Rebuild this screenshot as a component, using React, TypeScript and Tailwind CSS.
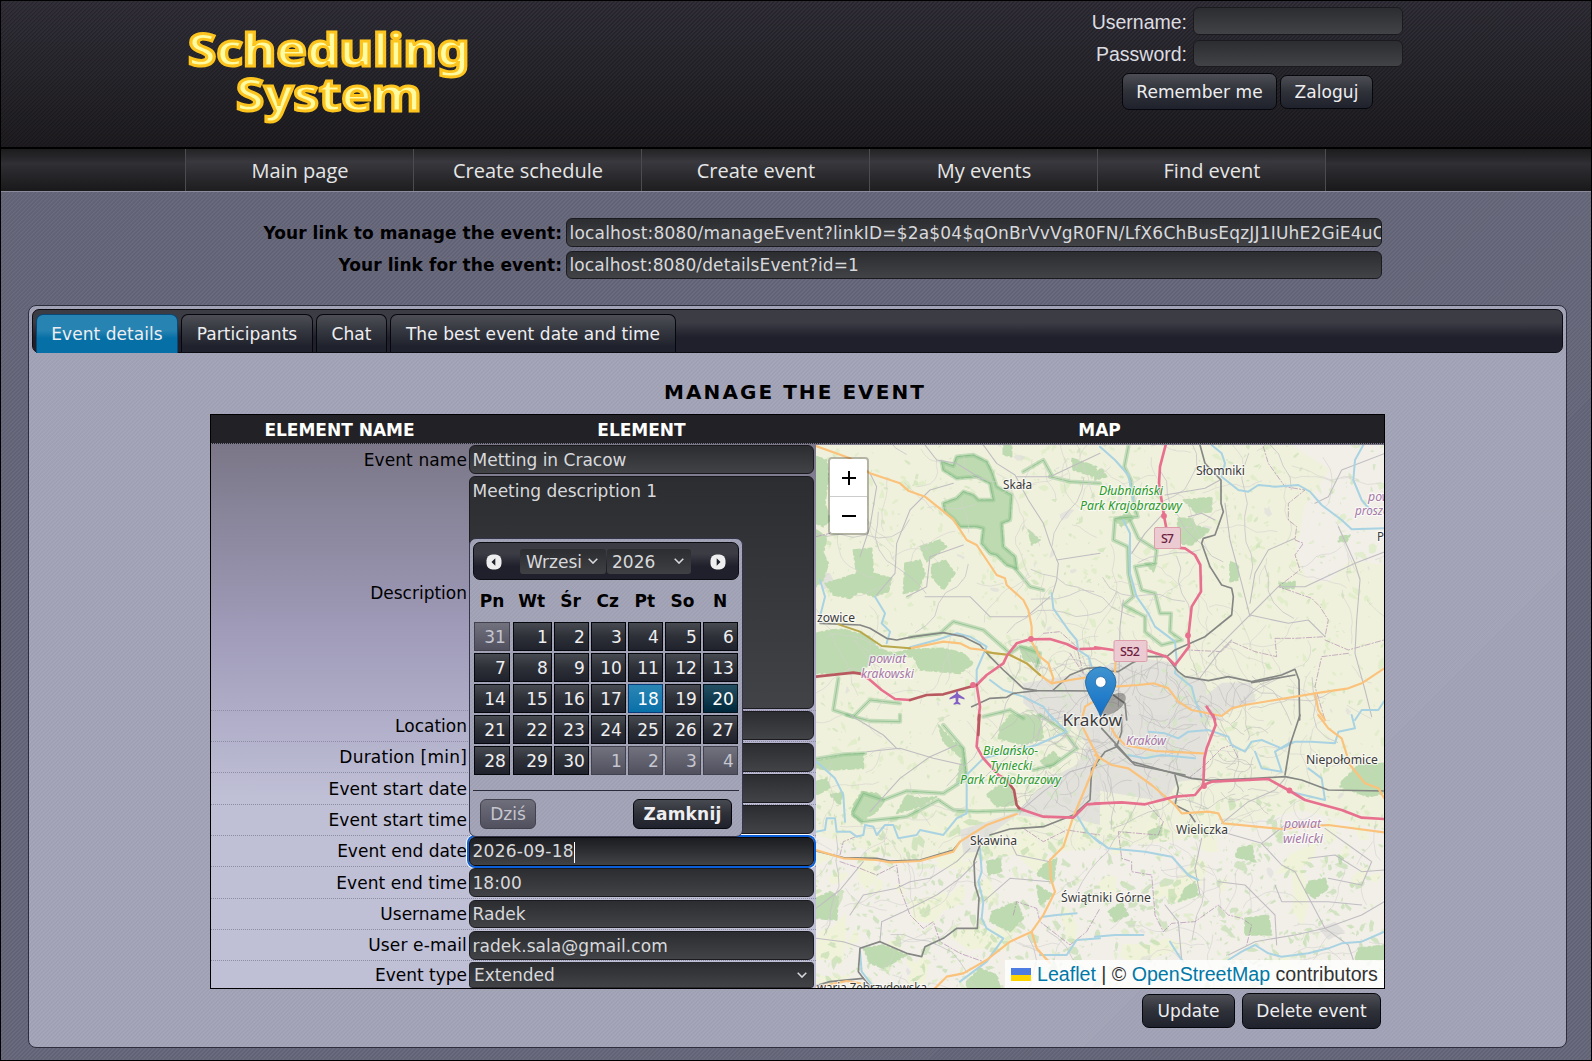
import type { ReactNode } from 'react';

const font = "font-['DejaVu_Sans',sans-serif]";
const field =
  'block rounded-[6px] border border-[#1b1b1f] bg-linear-to-b from-[#2c2d30] to-[#424347] pl-[2.500px] text-[17px] text-[#d8d9dc] outline-none';
const button =
  'flex items-center justify-center rounded-[7px] border border-[#06070c] bg-linear-to-b from-[#4d4e55] via-[#2f3139] to-[#1f222c] pt-[2px] text-[17px] tracking-[0.05px] text-[#eeeef0]';
const rowLabel = 'w-[256px] self-center pt-[2px] text-right text-[17px]';
const stripes =
  'bg-[repeating-linear-gradient(135deg,rgba(255,255,255,0.06)_0px,rgba(255,255,255,0.06)_1.2px,transparent_1.6px,transparent_2.83px)]';

function mulberry(seed: number) {
  let a = seed;
  return () => {
    a = (a + 0x6d2b79f5) | 0;
    let t = Math.imul(a ^ (a >>> 15), 1 | a);
    t = (t + Math.imul(t ^ (t >>> 7), 61 | t)) ^ t;
    return ((t ^ (t >>> 14)) >>> 0) / 4294967296;
  };
}

function scatter(seed: number, count: number, size: number, y0 = 445, y1 = 988, x0 = 816, x1 = 1384) {
  const r = mulberry(seed);
  let d = '';
  for (let i = 0; i < count; i++) {
    const x = x0 + r() * (x1 - x0);
    const y = y0 + r() * (y1 - y0);
    const n = 5 + Math.floor(r() * 4);
    const s = size * (0.35 + r() * r() * 1.6);
    const tilt = r() * 3;
    for (let k = 0; k < n; k++) {
      const ang = (k / n) * 6.283;
      const rad = s * (0.4 + r() * 0.9);
      const px = Math.cos(ang) * rad * 1.4;
      const py = Math.sin(ang) * rad * 0.7;
      const qx = x + px * Math.cos(tilt) - py * Math.sin(tilt);
      const qy = y + px * Math.sin(tilt) + py * Math.cos(tilt);
      d += (k ? 'L' : 'M') + qx.toFixed(1) + ' ' + qy.toFixed(1);
    }
    d += 'Z';
  }
  return d;
}

function lanes(seed: number, count: number, step: number, x0 = 816, x1 = 1384, y0 = 445, y1 = 988) {
  const r = mulberry(seed);
  let d = '';
  for (let i = 0; i < count; i++) {
    let x = x0 + r() * (x1 - x0);
    let y = y0 + r() * (y1 - y0);
    let a = r() * 6.28;
    d += `M${x.toFixed(1)} ${y.toFixed(1)}`;
    const n = 4 + Math.floor(r() * 7);
    for (let k = 0; k < n; k++) {
      a += (r() - 0.5) * 1.1;
      x += Math.cos(a) * step;
      y += Math.sin(a) * step;
      d += `L${x.toFixed(1)} ${y.toFixed(1)}`;
    }
  }
  return d;
}

const patchesLight = scatter(3, 1000, 3.2);
const patchesMid = scatter(11, 800, 2.1);
const patchesSouth = scatter(27, 560, 3.6, 800, 988);
const farmland = scatter(41, 46, 17, 800, 988);
const roadsMinor = lanes(5, 230, 7);
const roadsMajor = lanes(17, 34, 13);
const streets = lanes(23, 150, 4.5, 1030, 1250, 662, 800);
const cityGreen = scatter(61, 130, 3, 665, 800, 1010, 1220);

const quadrants = [
  {
    at: 'translate(810 440) scale(.33333)',
    urban: ['640,730 730,715 870,690 870,840 700,840 640,790', '30,400 60,400 75,430 40,450'],
    wood: [
      '395,65 430,78 440,50 490,45 530,65 545,95 560,140 605,165 600,240 575,250 580,320 615,350 620,385 590,375 560,345 540,340 515,310 520,265 500,260 450,260 430,235 405,215 400,190 440,175 460,155 490,165 505,180 550,180 540,130 500,110 440,115 400,90',
      '18,50 50,60 55,110 45,190 60,240 40,260 18,250',
      '18,270 50,290 40,340 55,370 40,420 18,440',
      '130,330 185,325 190,400 245,415 235,455 190,470 150,455 120,475 70,465 45,430 80,420 140,400',
      '285,370 330,360 345,400 325,450 280,460',
      '330,320 390,300 410,320 350,365',
      '365,375 405,360 435,400 400,450 365,410',
      '18,580 60,570 100,568 180,590 205,625 250,640 300,628 400,625 460,640 490,670 450,700 330,690 310,650 200,650 150,700 18,700',
      '655,270 690,300 665,315',
      '785,55 860,80 855,110 790,90',
      '580,15 605,15 605,50 580,45',
      '630,620 680,620 690,670 640,660',
    ],
    parks: [
      '300,592 390,580 430,545 520,570 600,640 630,620 690,640 680,680',
      '85,715 70,810 130,830 180,780 270,790',
      '520,830 600,810 640,835',
      '720,110 780,125 870,130',
      '640,95 700,60 725,105',
      '615,385 660,440 700,450',
      '395,65 430,78 440,50 490,45 530,65 545,95 560,140 605,165 600,240 575,250 580,320 615,350 620,385 590,375 560,345 540,340 515,310 520,265 500,260 450,260 430,235 405,215 400,190 440,175 460,155 490,165 505,180 550,180 540,130 500,110 440,115 400,90 395,65',
    ],
    water: [
      '30,420 45,470 30,530',
      '195,470 225,520 215,550 240,575 230,610',
      '725,460 730,505 775,570 800,600 805,630 835,650 845,680',
      '300,622 380,600 440,580 480,590 530,620 500,690 500,730',
      '540,720 580,750 640,770 700,800 730,840',
    ],
    rail: [
      '30,550 150,555 180,565 230,595 260,600 310,590 400,578 460,590 510,615 540,650 580,690 640,745 680,752 870,753',
      '730,750 780,705 830,685 870,682',
      '485,800 540,775 590,772 610,760 680,752',
    ],
    minor: [
      '520,15 560,70 615,105 655,180 700,250 720,310 745,370 740,420 725,470',
      '345,15 380,60 440,70 520,120',
      '180,100 200,140 180,260 150,350',
      '430,130 360,150 300,210 260,310 255,400 200,465',
      '620,110 720,110 870,40',
      '740,360 870,340',
      '345,470 400,470 480,470 540,530 650,530 720,470',
      '460,315 360,350 350,440 290,470',
    ],
    orange: [
      '18,18 120,55 180,100 270,130 295,152 345,170 430,238 470,300 500,315 560,405 585,415 590,435 640,480 655,510 665,560 665,600',
      '300,625 400,605 450,610 480,625 520,630 550,640 600,645 650,670 690,705 725,730 780,720 830,712',
      '662,600 690,650 715,670 730,715 725,730',
      '850,785 825,800 815,840',
    ],
    olive: ['85,553 150,575 215,618 300,625', '530,637 600,645 650,670 690,705'],
    pink: [
      '150,701 180,720 215,750 255,777 300,780',
      '500,735 530,705 580,670 592,645 620,610 660,598 720,597 770,612 800,627',
      '812,627 870,625',
      '500,735 510,800 505,840',
    ],
    crimson: ['18,710 130,698 150,701', '300,780 350,765 400,763 500,735'],
    border: ['700,580 750,575 800,620 820,700 780,640', '18,290 60,280 100,240'],
  },
  {
    at: 'translate(1095 440) scale(.33333)',
    urban: [
      '0,690 100,650 220,665 260,710 330,720 335,765 345,812 390,840 0,840',
      '335,765 380,728 470,728 482,785 430,800 380,828 345,812',
    ],
    wood: [
      '250,235 290,235 300,255 345,270 290,315 240,310',
      '265,180 350,172 350,215 305,220',
      '405,365 430,375 430,420 405,425',
      '735,290 765,285 755,305 730,305',
      '550,430 600,425 600,445 560,445',
      '0,100 20,85 35,110 0,120',
      '60,240 100,215 115,235 80,260',
      '150,370 185,370 175,395',
    ],
    parks: [
      '100,20 88,80 108,120 118,200 128,230 60,235 55,300 98,320 100,400 115,470 85,495 150,530 150,575 200,615 260,600 225,575 228,520 195,520 180,460 140,450 120,380 180,370 185,330 130,295 105,240',
    ],
    water: [
      '15,20 60,60 100,105 115,180',
      '85,240 105,280 105,400 125,470 160,520 180,560 240,605 245,660 240,700 290,740 300,780 320,830',
      '350,15 380,40 390,70 380,110 430,150 460,155 490,135 540,140 610,135 645,155 680,195 740,240 770,268 870,265',
      '805,15 780,60 775,120 800,180 830,215',
      '780,840 800,810 850,810 870,780',
    ],
    rail: [
      '315,15 330,70 378,120 378,190 385,215 360,285 325,295 320,310 345,380 380,435 410,445 415,470 410,525 330,590 240,630 215,650 150,650 110,670 70,695 0,690',
      '215,650 250,695 270,710 340,722 400,710 470,725 560,705 600,688 612,720 614,840',
      '470,728 600,705',
      '55,765 90,790 95,840',
    ],
    minor: [
      '210,165 330,145 375,120',
      '110,340 150,280 210,215',
      '340,650 400,590 480,510 550,440 630,440 780,370 870,335',
      '390,190 405,300 440,430 465,530',
      '465,525 580,550 640,540 690,590',
      '660,190 700,170 740,90 870,40',
      '730,260 780,370 795,420 785,540 780,640 810,750 830,830',
      '70,800 75,560 85,480',
      '310,720 370,640 410,600',
      '465,490 480,400 520,330 600,295',
      '280,230 320,220 360,240',
    ],
    orange: [
      '60,740 130,735 175,730 220,745 250,785 290,810 380,828 410,805 450,795 660,760 760,745 800,730 868,685',
      '660,760 670,810 690,840',
      '60,695 62,665',
    ],
    olive: [],
    pink: [
      '212,15 195,80 192,130 207,228 215,270',
      '215,320 270,325 300,345 316,375 318,455 290,500 280,590 282,620 240,675',
      '0,622 55,630 160,632 215,650 240,675',
      '335,800 355,830 360,840',
    ],
    crimson: [],
    border: [
      '505,20 520,70 545,105 570,140 630,150 580,190 580,240 605,260 600,300 625,310 600,345 615,390 550,440 650,475 675,500 700,540 690,590 600,595 540,595 545,650 480,635 410,605 380,635 280,630',
      '690,600 760,630 867,600',
      '760,640 680,650 660,740 690,840',
    ],
  },
  {
    at: 'translate(810 715) scale(.33333)',
    urban: [
      '450,345 530,320 620,290 670,240 720,190 800,150 830,90 790,20 870,-30 870,330 790,310 700,310 620,300 540,360 500,410 460,415',
    ],
    wood: [
      '130,270 155,230 200,235 225,255 200,290 150,320 125,300',
      '18,140 100,120 160,115 160,160 60,165 18,160',
      '570,40 600,0 690,0 700,70 640,90 565,70',
      '385,30 430,80 460,100 470,190 440,200 455,130 400,80',
      '530,240 560,215 600,205 620,270 560,275',
      '18,550 60,530 85,545 80,615 18,610',
      '545,590 620,560 640,610 600,650 540,620',
      '160,700 220,690 290,720 220,760 180,745',
      '470,800 510,760 560,780 570,820 470,820',
      '530,440 570,430 575,470 535,480',
      '700,450 740,430 730,500 680,480',
      '690,140 730,110 750,130 720,160',
      '18,200 50,190 60,220 18,240',
      '60,240 100,230 90,270',
      '680,510 730,540 690,570',
      '290,240 330,250 380,245 330,275 260,295',
    ],
    parks: [
      '110,0 180,18 270,20 270,0',
      '18,132 100,118 165,115',
      '130,290 160,235 220,255 290,228 400,235 470,190 460,100 400,30',
      '130,300 155,320 290,305 385,255 430,285 500,290 640,285',
      '690,0 760,45 800,100 730,150 670,165',
    ],
    water: [
      '18,350 45,345 50,310 75,310 80,350 120,350 140,365 160,360 165,330 190,335 200,360 225,330 250,330 265,370 320,360 330,345 400,360 440,310 470,295 470,180 520,130 600,110 680,90 770,50 720,0',
      '510,400 515,470 505,500 520,560 515,610 530,640 580,670 530,740 450,800',
      '20,140 75,190 100,240 105,320',
      '700,605 740,600 800,595',
      '690,720 770,720 800,675 870,670',
      '150,710 155,770 190,815',
      '800,300 830,350 870,385',
    ],
    rail: [
      '18,408 100,428 200,430 240,438 330,435 430,405 450,380',
      '540,360 600,342 700,335 790,300 840,255 845,160 860,150',
      '510,390 492,440 495,510 507,550 502,640 440,640 400,670 345,695 335,725 290,715 210,680 150,700 145,770 160,790',
      '160,790 60,800 18,812',
      '160,790 185,820',
    ],
    minor: [
      '170,110 270,100 370,130 460,150',
      '120,0 220,60 260,100',
      '180,290 270,190 360,125 440,90',
      '120,600 160,540 260,520 300,500 360,490 440,440 480,400',
      '210,680 215,620 280,590 380,540 450,490 500,440',
      '18,580 90,525 160,440',
      '520,560 600,490 720,500',
      '590,360 620,420 720,440',
      '18,670 100,680 160,700',
      '850,150 780,170 700,230 640,280',
    ],
    orange: [
      '18,405 100,430 200,435 240,442 330,438 430,410 450,380 530,330 620,297',
      '820,40 850,100 865,125 830,210 790,305 760,395 720,435 722,490 735,530 700,600 665,650 600,680 530,735 460,775 410,785 375,820',
      '665,650 680,700 720,745',
      '30,815 110,798 150,805',
    ],
    olive: [],
    pink: [
      '508,0 500,95 520,130 565,180 590,195',
      '625,278 640,285 700,305 790,308 830,268 870,265',
    ],
    crimson: ['508,0 505,60', '590,195 612,225 620,270 628,280'],
    border: [
      '90,440 150,460 200,480 260,450 270,520 300,600 340,640 370,620 390,680 450,715 520,740',
      '640,340 700,380 770,345 870,360',
      '610,600 620,560 680,580 690,620 780,690 830,650 870,580',
      '90,420 100,380 150,360',
    ],
  },
  {
    at: 'translate(1095 715) scale(.33333)',
    urban: ['0,0 340,0 330,190 250,200 210,260 0,225', '670,640 720,620 750,650 700,675'],
    wood: [
      '740,200 790,150 868,145 868,235 820,245 735,215',
      '640,500 690,490 700,520 660,550 630,530',
      '430,400 470,390 480,440 420,425',
      '270,520 300,500 310,540 250,560',
      '450,610 520,600 530,660 450,660',
      '790,700 868,690 868,735 780,735',
      '160,350 200,330 200,360 165,375',
      '730,420 745,430 735,450',
      '40,590 80,560 100,600 60,620',
    ],
    parks: [],
    water: [
      '160,50 210,55 250,70 280,50 340,45 400,65 410,90 450,110 470,80 500,75 560,100 600,80 650,80 720,85 730,50 780,40 770,0',
      '0,370 40,400 150,410 230,425 280,480 310,495',
      '400,735 440,710 480,690 520,715 560,725 640,715 700,700 740,685 800,680 868,650',
      '0,665 60,660 145,660',
      '225,680 250,720 265,740',
      '480,110 500,160 560,170 540,110 590,80',
      '100,120 150,130 200,120 300,130',
      '585,230 690,255 680,190 640,160',
    ],
    rail: [
      '20,40 70,95 110,140 200,165 290,190 340,196 480,190 570,185 620,195 700,225 868,228',
      '60,90 120,150 270,180',
      '615,0 585,90 570,180',
      '0,150 30,110 65,95 80,50 80,0',
      '240,180 250,220 240,270 280,290 300,320',
    ],
    minor: [
      '380,325 460,260 540,225 570,190',
      '380,350 500,385 560,450 600,470 690,640',
      '500,385 570,330 700,330',
      '320,370 300,460 315,540',
      '640,430 720,420 800,470 868,465',
      '690,340 760,390 830,440 800,510 700,490',
      '690,640 800,600 868,560',
      '400,720 480,680 600,660 690,640 760,690 775,735',
      '540,510 560,560 700,560 800,570',
      '210,570 250,620 260,735',
      '370,500 450,510 540,600 545,690',
    ],
    orange: [
      '0,120 50,150 100,160 170,210 240,270 260,295 340,290 370,295 385,325 560,342 700,330 868,352',
      '50,40 60,60 90,90 180,108 325,115',
      '670,0 700,40 740,70 765,150 810,205 850,220 868,250',
    ],
    olive: [],
    pink: [
      '355,0 362,30 335,100 328,130 325,210 300,240 240,245 150,268 80,262 0,266',
      '325,210 350,200 520,192 585,228 630,255 740,285 800,308 868,312',
    ],
    crimson: [],
    border: [
      '160,270 205,320 190,360 70,350 80,430 110,440 110,470 170,480 180,600 205,650 230,625 300,620 370,570 400,600 440,610 470,630 455,690',
      '280,190 330,150 380,100 410,90 430,130',
    ],
  },
];

type Label = { x: number; y: number; w?: number; t: string; c?: string; i?: boolean; s?: number };
const labels: Label[] = [
  { x: 1003, y: 489, w: 29, t: 'Skała' },
  { x: 1196, y: 475, w: 49, t: 'Słomniki' },
  { x: 1099, y: 495, w: 64, t: 'Dłubniański', c: '#2b992b', i: true },
  { x: 1080, y: 510, w: 102, t: 'Park Krajobrazowy', c: '#2b992b', i: true },
  { x: 817, y: 621.5, w: 38, t: 'zowice' },
  { x: 869, y: 663, w: 37, t: 'powiat', c: '#a678a6', i: true },
  { x: 861, y: 677.5, w: 53, t: 'krakowski', c: '#a678a6', i: true },
  { x: 1368, y: 500.5, w: 37, t: 'powiat', c: '#a678a6', i: true },
  { x: 1355, y: 515, w: 60, t: 'proszowicki', c: '#a678a6', i: true },
  { x: 1377, y: 541, w: 60, t: 'Proszowice' },
  { x: 1062.5, y: 725.5, w: 59.5, t: 'Kraków', s: 17 },
  { x: 1126, y: 744.5, w: 40, t: 'Kraków', c: '#a678a6', i: true },
  { x: 983, y: 755, w: 55, t: 'Bielańsko-', c: '#2b992b', i: true },
  { x: 990, y: 770, w: 42, t: 'Tyniecki', c: '#2b992b', i: true },
  { x: 960, y: 784, w: 101, t: 'Park Krajobrazowy', c: '#2b992b', i: true },
  { x: 970, y: 844.5, w: 47, t: 'Skawina' },
  { x: 1061, y: 901.5, w: 90, t: 'Świątniki Górne' },
  { x: 1306, y: 764, w: 72, t: 'Niepołomice' },
  { x: 1176, y: 834, w: 52, t: 'Wieliczka' },
  { x: 1284, y: 828, w: 37, t: 'powiat', c: '#a678a6', i: true },
  { x: 1283, y: 842.5, w: 40, t: 'wielicki', c: '#a678a6', i: true },
  { x: 817, y: 992, w: 110, t: 'waria Zebrzydowska' },
];

function Lines({ list, color, width, dash, opacity }: { list: string[]; color: string; width: number; dash?: string; opacity?: number }) {
  return (
    <>
      {list.map((p, i) => (
        <polyline key={i} points={p} fill="none" stroke={color} strokeWidth={width} strokeDasharray={dash} opacity={opacity} strokeLinejoin="round" strokeLinecap="round" />
      ))}
    </>
  );
}

function Layer({ render }: { render: (q: (typeof quadrants)[number]) => ReactNode }) {
  return (
    <>
      {quadrants.map((q) => (
        <g key={q.at} transform={q.at}>
          {render(q)}
        </g>
      ))}
    </>
  );
}

function MapDrawing() {
  return (
    <svg viewBox="816 445 568 543" className="block h-full w-full">
      <rect x="816" y="445" width="568" height="543" fill="#f0f1dc" />
      <polygon points="1292,445 1384,445 1384,565 1350,560 1328,582 1308,580 1296,553 1305,505 1330,470" fill="#f2efe9" />
      <polygon points="816,835 900,860 980,858 1080,850 1180,840 1300,810 1384,830 1384,988 816,988" fill="#f2efe9" />
      <path d={farmland} fill="#f0f2da" />
      <path d={patchesLight} fill="#dcebc6" opacity="0.75" />
      <path d={patchesMid} fill="#c6dfb3" opacity="0.6" />
      <path d={patchesSouth} fill="#c4deb2" opacity="0.7" />
      <Layer render={(q) => q.urban.map((p) => <polygon key={p} points={p} fill="#dfdedb" opacity="0.85" />)} />
      <path d={cityGreen} fill="#d3e6c4" opacity="0.8" />
      <path d={scatter(77, 60, 3.4, 445, 988)} fill="#dddcdc" opacity="0.6" />
      <Layer render={(q) => q.wood.map((p) => <polygon key={p} points={p} fill="#bedab0" stroke="#bedab0" strokeWidth="5" strokeDasharray="22 7 9 5" strokeLinejoin="round" />)} />
      <Layer render={(q) => <Lines list={q.parks} color="#8fc391" width={13} opacity={0.45} />} />
      <Layer render={(q) => <Lines list={q.parks} color="#6fae74" width={3} opacity={0.5} />} />
      <path d={roadsMinor} fill="none" stroke="#d3d1cf" strokeWidth="0.6" />
      <path d={roadsMajor} fill="none" stroke="#c6c4c6" strokeWidth="0.8" />
      <path d={streets} fill="none" stroke="#bfbebe" strokeWidth="0.6" />
      <Layer render={(q) => <Lines list={q.border} color="#b08fb0" width={3} dash="16 6 4 6" opacity={0.7} />} />
      <Layer render={(q) => <Lines list={q.minor} color="#bfbdc1" width={3.2} />} />
      <Layer render={(q) => <Lines list={q.water} color="#a9d3e2" width={6} />} />
      <Layer render={(q) => <Lines list={q.rail} color="#858785" width={5} />} />
      <Layer render={(q) => <Lines list={q.orange} color="#fbc27c" width={6.5} />} />
      <Layer render={(q) => <Lines list={q.olive} color="#b9a74c" width={6} />} />
      <Layer render={(q) => <Lines list={q.pink} color="#e8708f" width={8} />} />
      <Layer render={(q) => <Lines list={q.crimson} color="#b8595f" width={8} />} />
      {[
        [1164, 516],
        [1188, 635.5],
        [1204, 786],
        [1289.5, 790.5],
        [1031, 639],
        [973, 685],
      ].map(([x, y]) => (
        <circle key={x} cx={x} cy={y} r="2.9" fill="#e8708f" />
      ))}
      <path d="M957 690l1.3 4 6.2 4v1.6l-6-1.8-.3 4 2.2 1.8v1.2l-3.4-.9-3.4.9v-1.2l2.2-1.8-.3-4-6 1.8V698l6.2-4z" fill="#8461c4" />
      <g fontFamily="'Noto Sans', sans-serif">
        {labels.map((l, i) => (
          <text
            key={i}
            x={l.x}
            y={l.y}
            fontSize={l.s ?? 12.5}
            fontStyle={l.i ? 'italic' : 'normal'}
            fill={l.c ?? '#3b3b3b'}
            stroke="#ffffff"
            strokeOpacity="0.65"
            strokeWidth="2.4"
            strokeLinejoin="round"
            paintOrder="stroke"
            textLength={l.w}
            lengthAdjust="spacingAndGlyphs"
          >
            {l.t}
          </text>
        ))}
        <g fill="#ebcbd1" stroke="#dd9fac" strokeWidth="1">
          <rect x="1154.5" y="527.5" width="26" height="21" rx="1.5" />
          <rect x="1114" y="640.5" width="33" height="21" rx="1.5" />
        </g>
        <g fill="#6d2142" fontSize="12.5" fontWeight="500">
          <text x="1161" y="543" textLength="13">S7</text>
          <text x="1120" y="656" textLength="20">S52</text>
        </g>
      </g>
      <ellipse cx="1113" cy="704" rx="15" ry="8" fill="#000" opacity="0.28" transform="rotate(-38 1113 704)" />
      <path d="M1100.5 716.500C1097 706 1085.500 692 1085.500 682.200a15.200 15.200 0 0 1 30.400 0C1115.900 692 1104 706 1100.500 716.500z" fill="url(#pin)" stroke="#2a6fa8" strokeWidth="1" />
      <circle cx="1100.700" cy="682" r="5.400" fill="#fff" stroke="#2468a0" strokeWidth="0.8" />
      <defs>
        <linearGradient id="pin" x1="0" y1="0" x2="0" y2="1">
          <stop offset="0" stopColor="#3f93cf" />
          <stop offset="1" stopColor="#126fc6" />
        </linearGradient>
      </defs>
    </svg>
  );
}

function Chevron({ className }: { className: string }) {
  return (
    <svg viewBox="0 0 10 6" className={className} fill="none" stroke="#d8d9dc" strokeWidth="1.5">
      <path d="M.7.8 5 5.100 9.300.8" />
    </svg>
  );
}

const rows = [
  { label: 'Location', h: 'h-[31px]', pad: 'pt-0', ih: 'h-[29px]', v: '' },
  { label: 'Duration [min]', h: 'h-[31px]', pad: 'pt-px', ih: 'h-[29px]', v: '', ls: 'tracking-[0.22px]' },
  { label: 'Event start date', h: 'h-[32px]', pad: 'pt-px', ih: 'h-[29px]', v: '', ls: 'tracking-[0.06px]' },
  { label: 'Event start time', h: 'h-[31px]', pad: 'pt-0', ih: 'h-[29px]', v: '', ls: 'tracking-[0.06px]' },
  { label: 'Event end date', h: 'h-[31px]', pad: 'pt-px', ih: 'h-[29px]', v: '2026-09-18', focus: true },
  { label: 'Event end time', h: 'h-[32px]', pad: 'pt-px', ih: 'h-[29px]', v: '18:00', ls: 'tracking-[0.06px]' },
  { label: 'Username', h: 'h-[31px]', pad: 'pt-px', ih: 'h-[28px]', v: 'Radek' },
  { label: 'User e-mail', h: 'h-[31px]', pad: 'pt-px', ih: 'h-[29px]', v: 'radek.sala@gmail.com', ls: 'tracking-[0.15px]' },
];

const weeks = [
  [-31, 1, 2, 3, 4, 5, 6],
  [7, 8, 9, 10, 11, 12, 13],
  [14, 15, 16, 17, 18, 19, 20],
  [21, 22, 23, 24, 25, 26, 27],
  [28, 29, 30, -1, -2, -3, -4],
];

function dayClass(d: number) {
  const base = 'flex h-[29px] items-center justify-end border pr-[3px] pt-[2px] text-[17px] tracking-[0.1px] ';
  if (d < 0) return base + 'border-[#42424f] bg-linear-to-b from-[#72727f] to-[#50505e] text-[#c6c6d0]';
  if (d === 18) return base + 'border-[#093a78] bg-linear-to-b from-[#2a86b4] to-[#0670a8] text-white';
  if (d === 20) return base + 'border-[#04141f] bg-linear-to-b from-[#244f62] to-[#00283c] text-white';
  return base + 'border-[#06070c] bg-linear-to-b from-[#484a52] via-[#2e3038] to-[#1f222c] text-[#eeeef0]';
}

function Arrow({ flip }: { flip?: boolean }) {
  return (
    <svg viewBox="0 0 16 16" className={flip ? 'size-4 -scale-x-100' : 'size-4'}>
      <rect x="0.500" y="0.500" width="15" height="15" rx="6" fill="#eeeeee" />
      <path d="M9.300 4.200v7.600L5.500 8z" fill="#1f222c" />
    </svg>
  );
}

function Calendar() {
  return (
    <div className="absolute left-0 top-[94px] z-10 flex h-[299px] w-[274px] flex-col rounded-[7px] border border-[#33334a] bg-[#a0a0b5] px-[3px] pt-[3px]">
      <div className={`pointer-events-none absolute inset-0 rounded-[7px] ${stripes}`} />
      <div className="relative flex h-[38px] items-center rounded-[7px] border border-[#0c0d12] bg-linear-to-b from-[#3b3c44] from-30% to-[#1f202b] to-65% pl-[12px]">
        <span className="pt-[2px]">
          <Arrow />
        </span>
        <div className="ml-[18px] flex h-[25px] w-[86px] items-center rounded-[3px] bg-linear-to-b from-[#2c2d30] to-[#3f4044] pl-[6px] text-[17px] text-[#d8d9dc]">
          <span className="w-[58px] overflow-hidden whitespace-nowrap pt-[3px]">Wrzesi</span>
          <Chevron className="ml-[4px] h-[6px] w-[10px]" />
        </div>
        <div className="ml-px flex h-[25px] w-[84px] items-center rounded-[3px] bg-linear-to-b from-[#2c2d30] to-[#3f4044] pl-[5px] text-[17px] text-[#d8d9dc]">
          <span className="w-[57px] pt-[3px]">2026</span>
          <Chevron className="ml-[5px] h-[6px] w-[10px]" />
        </div>
        <span className="ml-[19px] pt-[2px]">
          <Arrow flip />
        </span>
      </div>
      <div className="relative mt-[7px] grid h-[29px] grid-cols-[36px_39px_35px_35px_35px_36px_35px] items-center gap-x-[2.100px] pl-px text-center text-[17px] font-bold text-black">
        {['Pn', 'Wt', 'Śr', 'Cz', 'Pt', 'So', 'N'].map((d) => (
          <span key={d}>{d}</span>
        ))}
      </div>
      <div className="relative mt-[6px] flex flex-col gap-[2px] pl-px">
        {weeks.map((w, i) => (
          <div key={i} className="grid grid-cols-[39px_41px_37px_37px_37px_38px_35px]">
            {w.map((d, k) => (
              <div key={k} className={k === 6 ? '' : k === 0 ? 'pr-[3px]' : 'pr-[2px]'}>
                <div className={dayClass(d)}>{Math.abs(d)}</div>
              </div>
            ))}
          </div>
        ))}
      </div>
      <div className="relative mt-[15px] flex justify-between border-t border-[#2b2b3b] pl-[7px] pr-[7px] pt-[8px]">
        <div className="flex h-[30px] w-[56px] items-center justify-center rounded-[6px] border border-[#42424f] bg-linear-to-b from-[#6f6f7c] to-[#50505e] pt-[2px] text-[17px] text-[#c6c6d0]">
          Dziś
        </div>
        <div className="flex h-[30px] w-[99px] items-center justify-center rounded-[6px] border border-[#06070c] bg-linear-to-b from-[#484a52] via-[#2e3038] to-[#1f222c] pt-[2px] text-[17px] font-bold tracking-[0.2px] text-[#eeeef0]">
          Zamknij
        </div>
      </div>
    </div>
  );
}

const navItems = ['Main page', 'Create schedule', 'Create event', 'My events', 'Find event'];

const tabs = [
  { t: 'Participants', w: 'w-[132px]' },
  { t: 'Chat', w: 'w-[71px]' },
  { t: 'The best event date and time', w: 'w-[286px]' },
];

export default function App() {
  return (
    <div className={`${font} flex h-[1061px] w-[1592px] flex-col overflow-hidden border border-black bg-[#626276] text-black`}>
      <header className="h-[148px] shrink-0 border-b-2 border-black bg-linear-to-b from-[#322f39] via-[#28272d] to-[#1e1c20]">
        <div className="flex h-full bg-[repeating-linear-gradient(135deg,rgba(0,0,0,0.2)_0px,rgba(0,0,0,0.2)_1.2px,transparent_1.6px,transparent_2.83px)]">
          <svg className="ml-[183px] mt-[19px] h-[110px] w-[290px]" viewBox="184 20 290 110">
            <g fontFamily="'Noto Sans', sans-serif" fontWeight="700" fontSize="45.500" fill="#fffba2" stroke="#fcc41c" strokeWidth="2.900">
              <text x="188" y="65.500" textLength="281.500" lengthAdjust="spacingAndGlyphs">Scheduling</text>
              <text x="236" y="111" textLength="185.500" lengthAdjust="spacingAndGlyphs">System</text>
            </g>
          </svg>
          <div className="ml-auto mr-[188px] w-[330px] pt-[6px]">
            {[
              ['Username:', 'h-[28px]', 'mb-[5px]'],
              ['Password:', 'h-[27px]', 'mb-[6px]'],
            ].map(([t, h, m]) => (
              <div key={t} className={`flex items-center justify-end ${m}`}>
                <span className="mr-[6px] pt-px font-['Liberation_Sans',sans-serif] text-[19.500px] leading-[26px] text-[#dcdce0]">{t}</span>
                <input readOnly className={`${field} ${h} w-[210px]`} />
              </div>
            ))}
            <div className="flex items-center justify-end gap-[3px] pr-[30px]">
              <button className={`${button} h-[37px] w-[155px]`}>Remember me</button>
              <button className={`${button} h-[34px] w-[93px]`}>Zaloguj</button>
            </div>
          </div>
        </div>
      </header>

      <nav className="flex h-[43px] shrink-0 border-b border-[#8b8b9c] bg-linear-to-b from-[#1c1c1e] via-[#2f2f34] via-35% to-[#19191b] pl-[184px]">
        {navItems.map((n) => (
          <a
            key={n}
            className="flex w-[228px] items-center justify-center border-l border-[#4b4b50] bg-linear-to-b from-[#232325] via-[#38383e] via-30% to-[#1e1e20] pl-px pt-px font-['Open_Sans',sans-serif] text-[20px] text-[#e6e6e6]"
          >
            {n}
          </a>
        ))}
        <span className="border-l border-[#4b4b50]" />
      </nav>

      <div className={`flex grow flex-col bg-[#626276] ${stripes}`}>
        <div className="mt-[26px] flex flex-col gap-[4px]">
          <div className="flex h-[29px] items-center">
            <label className="w-[561px] pt-[2px] text-right text-[17px] font-bold tracking-[0.06px]">Your link to manage the event:</label>
            <input
              readOnly
              className={`${field} ml-[4px] h-[29px] w-[816px] tracking-[0.195px]`}
              value="localhost:8080/manageEvent?linkID=$2a$04$qOnBrVvVgR0FN/LfX6ChBusEqzJJ1IUhE2GiE4uO"
            />
          </div>
          <div className="flex h-[28px] items-center">
            <label className="w-[561px] pt-[2px] text-right text-[17px] font-bold tracking-[0.06px]">Your link for the event:</label>
            <input readOnly className={`${field} ml-[4px] h-[28px] w-[816px] tracking-[0.11px]`} value="localhost:8080/detailsEvent?id=1" />
          </div>
        </div>

        <main className={`ml-[27px] mt-[26px] flex h-[743px] w-[1539px] flex-col rounded-[8px] border border-[#2d2d3d] bg-[#a0a0b5] p-[3px] ${stripes}`}>
          <div className="flex h-[44px] shrink-0 items-start gap-[3px] rounded-[7px] border border-[#0c0d12] bg-linear-to-b from-[#3b3c44] from-30% to-[#1f202b] to-65% pl-[3px] pt-[4px] text-[17px] tracking-[0.06px] text-[#eeeef0]">
            <div className="flex h-[39px] w-[142px] items-center justify-center rounded-t-[7px] border border-b-0 border-[#0a4878] bg-linear-to-b from-[#2784b2] from-40% to-[#0670a6] to-60% pt-px">
              Event details
            </div>
            {tabs.map(({ t, w }) => (
              <div
                key={t}
                className={`flex h-[38px] items-center justify-center rounded-t-[7px] border border-b-0 border-[#06070c] bg-linear-to-b from-[#4d4e55] to-[#1f222c] to-85% pt-[2px] ${w}`}
              >
                {t}
              </div>
            ))}
          </div>

          <h1 className="mt-[27px] h-[24px] pr-[5px] text-center text-[20px] font-bold leading-[24px] tracking-[2.060px]">MANAGE THE EVENT</h1>

          <section className="ml-[178px] mt-[10px] flex h-[575px] w-[1175px] shrink-0 flex-col border border-black">
            <div className="grid h-[29px] shrink-0 grid-cols-[257px_347px_1fr] items-center border-b border-dotted border-[#77778a] bg-[#222226] pt-[3px] text-center text-[17px] font-bold text-white">
              <span>ELEMENT NAME</span>
              <span>ELEMENT</span>
              <span>MAP</span>
            </div>
            <div className="flex grow bg-linear-to-b from-[#7b7788] via-[#a09cba] via-35% to-[#bfbfd6] to-65%">
              <div className="relative w-[605px]">
                <div className="flex h-[31px]">
                  <label className={`${rowLabel} tracking-[0.1px]`}>Event name</label>
                  <input readOnly className={`${field} ml-[2px] mt-px h-[29px] w-[345px]`} value="Metting in Cracow" />
                </div>
                <div className="flex h-[236px] border-b border-dotted border-[#8d8da4]">
                  <label className={rowLabel}>Description</label>
                  <div className="relative ml-[2px] mt-px">
                    <textarea readOnly className={`${field} h-[233px] w-[345px] resize-none pt-[4px] leading-[21px]`} value="Meeting description 1" />
                  </div>
                </div>
                {rows.map((r) => (
                  <div key={r.label} className={`flex border-b border-dotted border-[#8d8da4] ${r.h}`}>
                    <label className={`${rowLabel} ${r.ls ?? ''}`}>{r.label}</label>
                    <div className={`relative ml-[2px] ${r.pad}`}>
                      {r.focus ? (
                        <div className="flex h-[29px] w-[345px] items-center rounded-[6px] border border-[#08080a] bg-linear-to-b from-[#1c1d20] to-[#424347] pl-[2.500px] pt-px text-[17px] tracking-[0.25px] text-[#d8d9dc] shadow-[0_0_0_2px_#0b5fd8,0_0_0_3px_#ffffff]">
                          {r.v}
                          <span className="h-[21px] w-px bg-white" />
                        </div>
                      ) : (
                        <input readOnly className={`${field} ${r.ih} w-[345px] tracking-[0.05px]`} value={r.v} />
                      )}
                    </div>
                  </div>
                ))}
                <div className="flex h-[27px]">
                  <label className={rowLabel}>Event type</label>
                  <div className="ml-[2px] mt-px flex h-[26px] w-[345px] items-center justify-between rounded-[3px] border border-[#2a2a2e] bg-linear-to-b from-[#2c2d30] to-[#424347] pl-[4px] pr-[6px] text-[17px] text-[#d8d9dc]">
                    <span className="pt-[2px]">Extended</span>
                    <Chevron className="h-[6px] w-[10px]" />
                  </div>
                </div>
                <div className="absolute left-[258px] top-0">
                  <Calendar />
                </div>
              </div>
              <div className="relative mt-px h-[543px] w-[568px] overflow-hidden">
                <MapDrawing />
                <div className="absolute left-[12px] top-[12px] flex h-[78px] w-[41px] flex-col rounded-[4px] border-2 border-black/25 bg-white bg-clip-padding">
                  <div className="flex h-[38px] items-center justify-center border-b border-[#cccccc]">
                    <svg viewBox="0 0 16 16" className="size-4" stroke="#000" strokeWidth="2">
                      <path d="M8 1v14M1 8h14" />
                    </svg>
                  </div>
                  <div className="flex h-[36px] items-center justify-center">
                    <svg viewBox="0 0 16 16" className="size-4" stroke="#000" strokeWidth="2">
                      <path d="M1 9h14" />
                    </svg>
                  </div>
                </div>
                <div className="absolute bottom-0 right-0 flex h-[28px] w-[379px] items-center whitespace-pre bg-white/80 pl-[6px] pt-px font-['Liberation_Sans',sans-serif] text-[19.600px] text-[#333]">
                  <svg viewBox="0 0 20 13" className="mr-[6px] h-[13px] w-[20px]">
                    <path fill="#4c7be1" d="M0 0h20v7H0z" />
                    <path fill="#ffd500" d="M0 7h20v6H0z" />
                  </svg>
                  <span className="text-[#0078a8]">Leaflet</span>
                  <span>{' | © '}</span>
                  <span className="text-[#0078a8]">OpenStreetMap</span>
                  <span>{' contributors'}</span>
                </div>
              </div>
            </div>
          </section>
          <div className="mr-[182px] mt-[4px] flex items-center justify-end gap-[7px]">
            <button className={`${button} h-[34px] w-[93px]`}>Update</button>
            <button className={`${button} h-[36px] w-[139px]`}>Delete event</button>
          </div>
        </main>
      </div>
    </div>
  );
}
